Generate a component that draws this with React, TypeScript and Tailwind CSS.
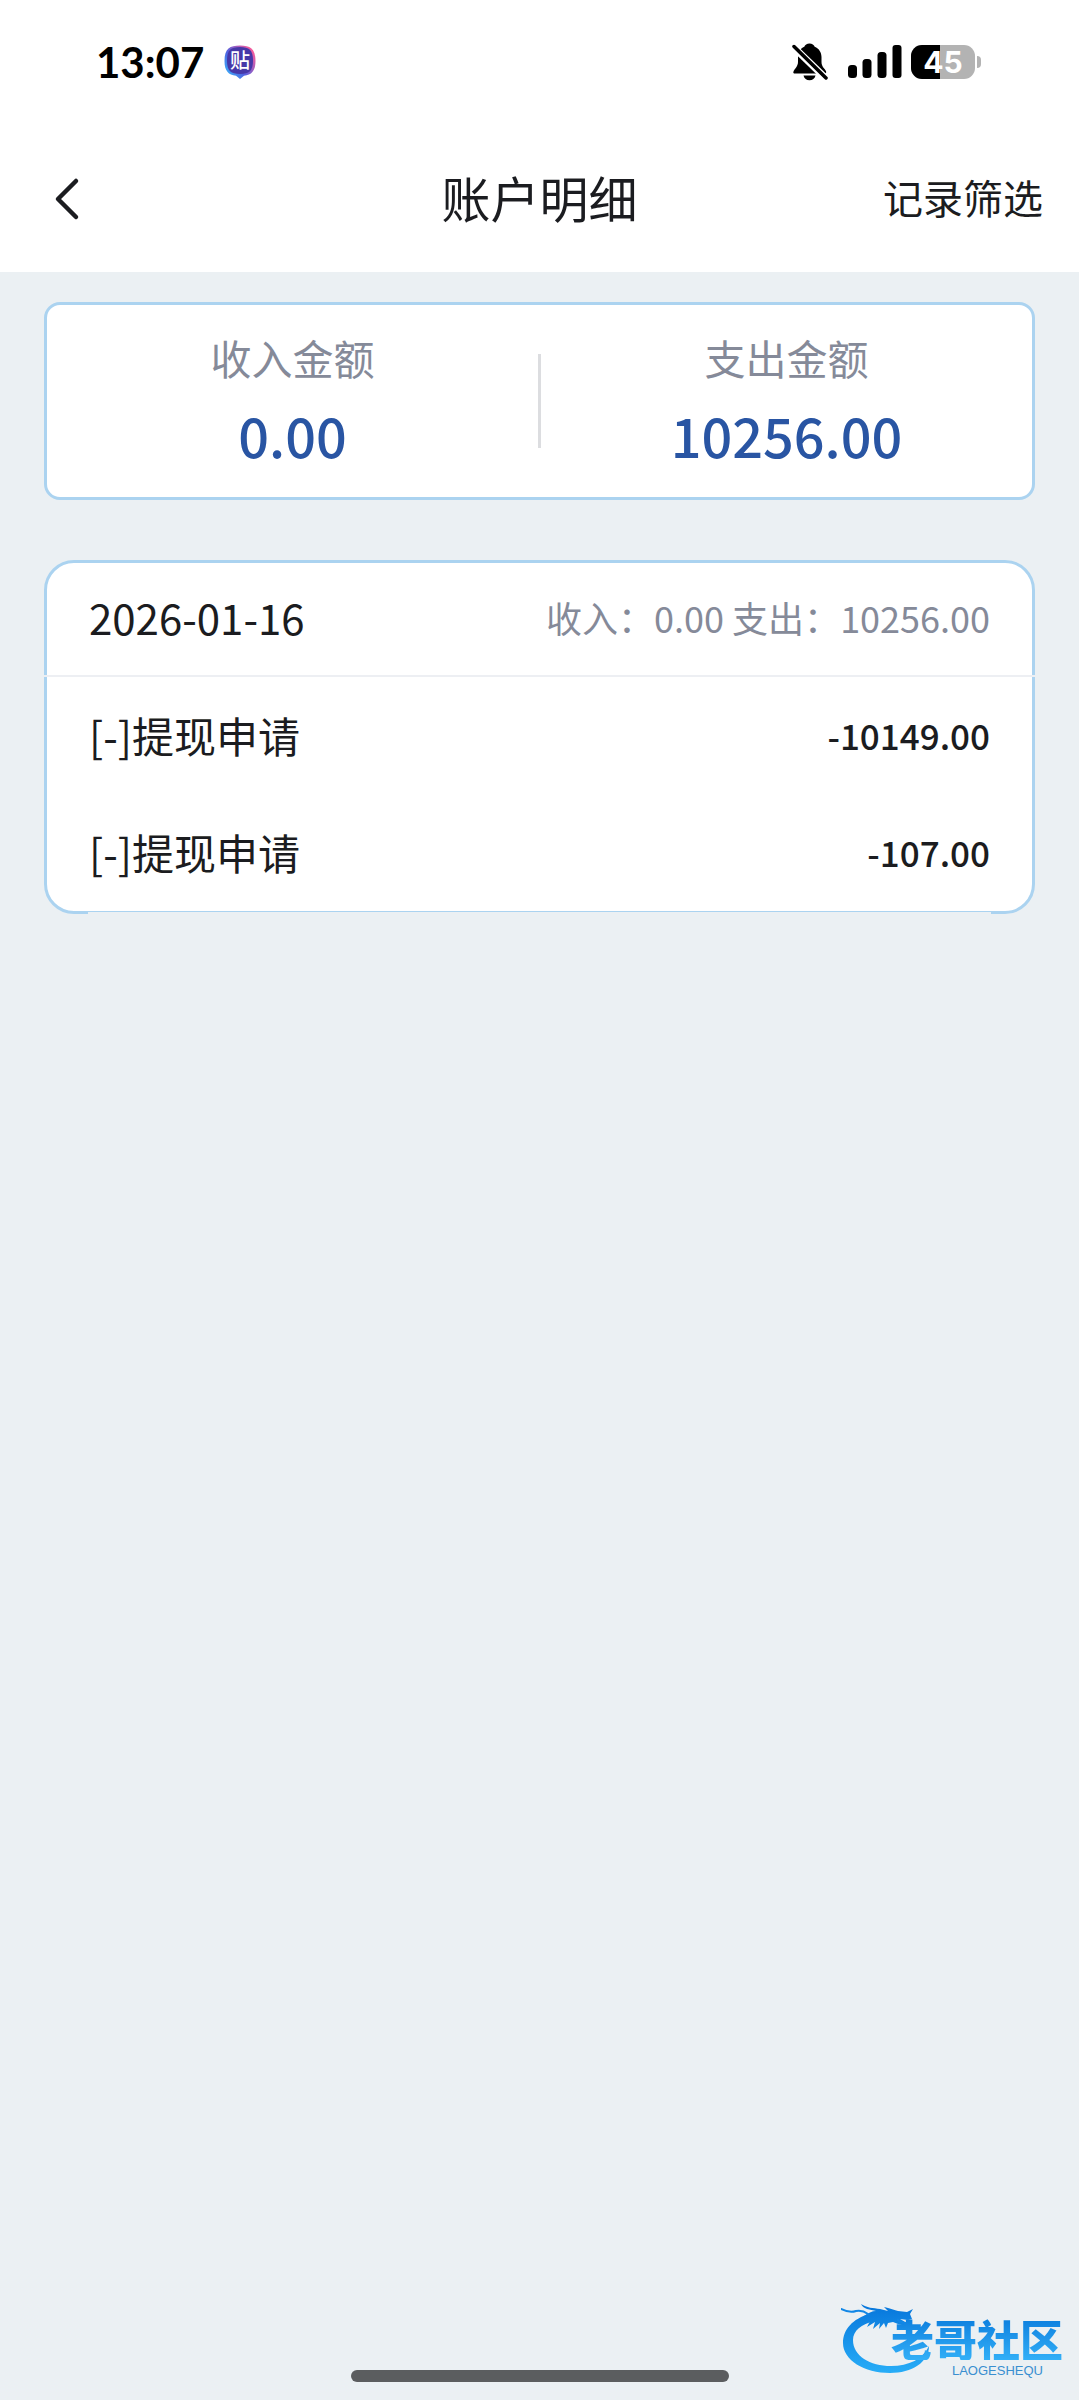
// 账户明细
// 顶部汇总收入 / 支出金额,下方按日期分组列出流水。

type RecordItem = { id: number; title: string; amount: string };

type DayGroup = {
  date: string;
  income: string;
  expense: string;
  items: RecordItem[];
};

const days: DayGroup[] = [
  {
    date: "2026-01-16",
    income: "0.00",
    expense: "10256.00",
    items: [
      { id: 1, title: "[-]提现申请", amount: "-10149.00" },
      { id: 2, title: "[-]提现申请", amount: "-107.00" },
    ],
  },
];

function MutedBell() {
  return (
    <svg width="36" height="38" viewBox="0 0 36 38" aria-hidden="true">
      <path
        d="M17.500 0.500c-2.600 0-4.600 1.400-5.200 3.200C8 5.500 6 9.500 6 14v5c0 2.400-1 4.400-2.600 6.400C1.600 27.600 0 30.500 3 30.500h29.500c3 0 1.600-3-0.400-5.100C30.300 23.400 29.500 21.400 29.500 19v-5c0-4.500-2.400-8.500-6.800-10.300-0.600-1.800-2.600-3.200-5.200-3.200z"
        fill="#000"
      />
      <path d="M11.500 32.500h12c-0.600 3-3 4.800-6 4.800s-5.400-1.800-6-4.800z" fill="#000" />
      <path d="M1 3.500l34 33" stroke="#fff" strokeWidth="7" />
      <path d="M2 3.500l32 31.500" stroke="#000" strokeWidth="3.500" strokeLinecap="round" />
    </svg>
  );
}

function Signal() {
  return (
    <svg width="54" height="34" viewBox="0 0 54 34" aria-hidden="true">
      <rect x="0" y="20" width="9" height="13" rx="3.500" />
      <rect x="14.500" y="14" width="9" height="19" rx="3.500" />
      <rect x="29.500" y="7" width="9" height="26" rx="3.500" />
      <rect x="44.500" y="0" width="9" height="33" rx="3" />
    </svg>
  );
}

function Battery({ level }: { level: number }) {
  return (
    <div className="flex items-center gap-[2px]">
      <div className="relative flex h-[34px] w-[64px] items-center justify-center overflow-hidden rounded-[11px] bg-[#b3b3b3]">
        <div className="absolute inset-y-0 left-0 bg-black" style={{ width: `${level}%` }} />
        <span className="relative font-['Inter',sans-serif] text-[30px] leading-[34px] font-bold text-white">
          {level}
        </span>
      </div>
      <div className="h-[12px] w-[4px] rounded-r-full bg-[#b3b3b3]" />
    </div>
  );
}

function AppBadge() {
  return (
    <svg width="32" height="34" viewBox="0 0 32 34" aria-hidden="true">
      <defs>
        <linearGradient id="badgeRim" x1="0" y1="1" x2="1" y2="0.200">
          <stop offset="0" stopColor="#35c6ff" />
          <stop offset="0.450" stopColor="#5060e0" />
          <stop offset="1" stopColor="#ff5c98" />
        </linearGradient>
      </defs>
      <path
        d="M16 0.500c10 0 15.500 3 15.500 15.500 0 10-4 14-11.500 14.800L16 34l-4-3.200C4.500 30 0.500 26 0.500 16 0.500 3.500 6 0.500 16 0.500z"
        fill="url(#badgeRim)"
      />
      <path d="M16 2c9 0 13 3 13 13.500S25 29 16 29 3 26 3 15.500 7 2 16 2z" fill="#4638a8" />
      <text x="16" y="22.500" textAnchor="middle" fontSize="20" fontWeight="500" fill="#fff" fontFamily="Noto Sans CJK SC, sans-serif">
        贴
      </text>
    </svg>
  );
}

function StatusBar() {
  return (
    <div className="flex h-[124px] items-center justify-between pr-[98px] pl-[96px]">
      <div className="flex items-center gap-[20px]">
        <span className="font-['Lato',sans-serif] text-[42px] leading-[48px] font-bold text-black">13:07</span>
        <AppBadge />
      </div>
      <div className="flex items-center">
        <MutedBell />
        <div className="ml-[20px]">
          <Signal />
        </div>
        <div className="ml-[9px]">
          <Battery level={45} />
        </div>
      </div>
    </div>
  );
}

function NavBar() {
  return (
    <header className="grid h-[148px] grid-cols-[1fr_auto_1fr] items-center px-[36px] pb-[2px]">
      <button type="button" aria-label="返回" className="justify-self-start pt-[4px] pl-[16px]">
        <svg width="28" height="44" viewBox="0 0 28 44" fill="none" aria-hidden="true">
          <path d="M24 4L6 22l18 18" stroke="#1b1c20" strokeWidth="4.500" strokeLinecap="round" strokeLinejoin="round" />
        </svg>
      </button>
      <h1 className="text-[49px] leading-[64px]">账户明细</h1>
      <button type="button" className="justify-self-end text-[40px] leading-[56px]">
        记录筛选
      </button>
    </header>
  );
}

function SummaryCell({ label, value }: { label: string; value: string }) {
  return (
    <div className="flex flex-1 flex-col items-center gap-2">
      <span className="text-[41px] leading-[60px] text-[#858a99]">{label}</span>
      <span className="text-[54px] leading-[80px] font-medium text-[#2955a3]">{value}</span>
    </div>
  );
}

function Summary() {
  return (
    <section className="flex items-center rounded-[16px] border-[3px] border-[#abd3f0] bg-white pt-[22px] pb-[22px]">
      <SummaryCell label="收入金额" value="0.00" />
      <div className="h-[94px] w-[3px] bg-[#dcdde0]" />
      <SummaryCell label="支出金额" value="10256.00" />
    </section>
  );
}

function DayCard({ day }: { day: DayGroup }) {
  return (
    <section className="relative rounded-[30px] border-[3px] border-[#abd3f0] bg-white">
      <div className="flex h-[112px] items-center justify-between px-[42px] pb-[4px]">
        <h2 className="text-[42px] leading-[60px]">{day.date}</h2>
        <p className="text-[36px] leading-[52px] text-[#858a99]">
          收入：{day.income} 支出：{day.expense}
        </p>
      </div>
      <div className="relative -mx-[3px] h-[2px] bg-[#edeff3]" />
      <ul>
        {day.items.map((item) => (
          <li key={item.id} className="flex h-[117px] items-center justify-between px-[42px] pb-[2px]">
            <span className="text-[42px] leading-[60px]">{item.title}</span>
            <span className="text-[35px] leading-[52px] font-medium">{item.amount}</span>
          </li>
        ))}
      </ul>
      {/* 底边中段只留一条细线 */}
      <div className="absolute inset-x-[41px] -bottom-[3px] h-[2px] bg-[#ebf0f3]" />
    </section>
  );
}

function CommunityMark() {
  return (
    <div className="absolute right-[16px] bottom-[22px] h-[76px] w-[222px]">
      <svg width="222" height="76" viewBox="0 0 222 76" className="absolute inset-0" aria-hidden="true">
        <defs>
          <linearGradient id="dragon" gradientUnits="userSpaceOnUse" x1="0" y1="5" x2="0" y2="72">
            <stop offset="0" stopColor="#0878dc" />
            <stop offset="1" stopColor="#28aef8" />
          </linearGradient>
        </defs>
        <path
          d="M28 12C12 17 2 27 2 41c0 17 21 30 47 30 22 0 39-11 39-27-6 13-20 20-38 20C29 64 12 54 12 38c0-9 8-16 22-19z"
          fill="url(#dragon)"
        />
        <path
          d="M23 14c4-3 8-5 12-5l-9-2c-3-1-5-3-6-5 6 4 12 4 19 5l8 2-4-4c6 1 9 3 14 4l9 1 6-3-3 5 2 5-4 1-8-1 7 4-1 3-8-2-5-2-5 1-2 5-2-5-5 6 1-6-7 6 2-7-8 5 3-6-8 2 3-4z"
          fill="url(#dragon)"
        />
        <path d="M0 7c6 3 10 4 15 2 5-1 8 0 12 3" fill="none" stroke="#1287e6" strokeWidth="2" strokeLinecap="round" />
        <path d="M57 18c3 3 8 4 12 2" fill="none" stroke="#1287e6" strokeWidth="2" strokeLinecap="round" />
      </svg>
      <div className="relative flex flex-col items-end pt-[14px]">
        <span className="bg-linear-to-b from-[#0b7ddd] to-[#32aff7] bg-clip-text text-[43px] leading-[44px] font-black text-transparent">
          老哥社区
        </span>
        <span className="mt-[4px] mr-[20px] font-['Liberation_Sans',sans-serif] text-[13px] leading-[14px] text-[#3a8fd0]">
          LAOGESHEQU
        </span>
      </div>
    </div>
  );
}

export default function App() {
  return (
    <div className="relative flex min-h-screen flex-col bg-[#ebf0f3] font-['Noto_Sans_CJK_SC',sans-serif] text-[#1b1c20]">
      <div className="bg-white">
        <StatusBar />
        <NavBar />
      </div>
      <main className="flex flex-1 flex-col gap-[60px] px-[44px] pt-[30px]">
        <Summary />
        {days.map((day) => (
          <DayCard key={day.date} day={day} />
        ))}
      </main>
      <CommunityMark />
      <div className="mb-[18px] h-[12px] w-[378px] self-center rounded-full bg-[#5b5d5f]" />
    </div>
  );
}
